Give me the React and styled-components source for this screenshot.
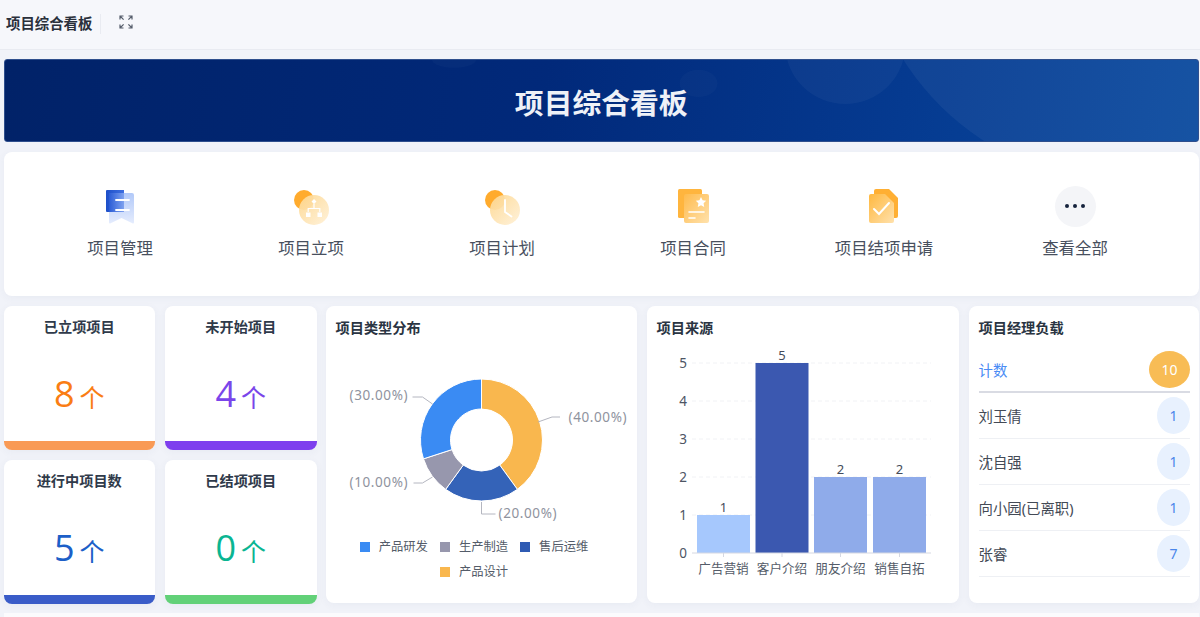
import React from "react";
import styled, { createGlobalStyle } from "styled-components";

const Global = createGlobalStyle`
  html, body { margin: 0; padding: 0; background: #f1f3f9; }
  body { font-family: "Noto Sans", "Noto Sans CJK SC", sans-serif; color: #2c3644; overflow: hidden; }
  * { box-sizing: border-box; }
`;

const Page = styled.div`
  width: 1200px;
  height: 617px;
  overflow: hidden;
  display: flex;
  flex-direction: column;
`;
const TopBar = styled.header`
  height: 50px;
  flex: none;
  display: flex;
  align-items: center;
  padding: 0 0 2px 6px;
  background: #f6f7fb;
  border-bottom: 1px solid #e9ebf1;
`;
const TopTitle = styled.h1`
  margin: 0;
  font-size: 14.4px;
  line-height: 20px;
  font-weight: 700;
  color: #2a303b;
  padding-right: 8px;
  border-right: 1px solid #e9ebf1;
`;
const ExpandButton = styled.span`
  display: flex;
  margin-left: 18px;
  margin-top: -4px;
  color: #555d6b;
`;
const Content = styled.main`
  display: flex;
  flex-direction: column;
  gap: 10px;
  padding: 9px 1px 0 3.5px;
`;
const Banner = styled.section`
  position: relative;
  height: 83px;
  border-radius: 3px;
  overflow: hidden;
  background: linear-gradient(100deg, #012268 0%, #01297a 45%, #053a90 75%, #0a4a9f 100%);
  display: flex;
  align-items: center;
  justify-content: center;
  border: 1px solid #2f4f8d;
`;
const BannerArt = styled.svg`
  position: absolute;
  inset: 0;
  width: 100%;
  height: 100%;
`;
const BannerTitle = styled.h2`
  position: relative;
  margin: 5px 0 0;
  font-size: 28.8px;
  line-height: 40px;
  font-weight: 700;
  color: #eef1f7;
`;
const NavCard = styled.nav`
  height: 144px;
  background: #fff;
  border-radius: 8px;
  box-shadow: 0 2px 8px rgba(60, 70, 110, 0.05);
  display: grid;
  grid-template-columns: repeat(6, 191px);
  padding: 33px 0 0 21px;
`;
const NavItem = styled.div`
  display: flex;
  flex-direction: column;
  align-items: center;
  gap: 9px;
`;
const NavIcon = styled.div`
  width: 42px;
  height: 42px;
  display: flex;
  align-items: center;
  justify-content: center;
`;
const NavLabel = styled.span`
  font-size: 16.4px;
  line-height: 24px;
  color: #48505e;
`;
const MoreCircle = styled.div`
  width: 41px;
  height: 41px;
  border-radius: 50%;
  background: #f4f5f8;
  display: flex;
  align-items: center;
  justify-content: center;
  gap: 4px;
`;
const Dot = styled.i`
  width: 4px;
  height: 4px;
  border-radius: 50%;
  background: #15233d;
`;
const Dash = styled.div`
  display: grid;
  grid-template-columns: 312px 311px 312px 230.5px;
  gap: 10px;
  height: 298px;
`;
const StatGrid = styled.div`
  display: grid;
  grid-template-columns: 151.5px 151.5px;
  grid-auto-rows: 144px;
  gap: 10px;
`;
const StatCard = styled.article`
  background: #fff;
  border-radius: 8px;
  overflow: hidden;
  display: flex;
  flex-direction: column;
  align-items: center;
  box-shadow: 0 2px 8px rgba(60, 70, 110, 0.05);
  border-bottom: 9px solid ${p => p.$bar};
`;
const StatTitle = styled.h3`
  margin: 11px 0 0;
  font-size: 14.2px;
  line-height: 20px;
  font-weight: 700;
  color: #2f3a4a;
`;
const StatValue = styled.div`
  margin-top: 32px;
  display: flex;
  align-items: baseline;
  gap: 5px;
  color: ${p => p.$color};
  font-family: "Open Sans", "Noto Sans", sans-serif;
  font-size: 36px;
  line-height: 50px;
`;
const StatUnit = styled.span`
  font-family: "Noto Sans CJK SC", sans-serif;
  font-size: 25px;
`;
const ChartCard = styled.article`
  background: #fff;
  border-radius: 8px;
  box-shadow: 0 2px 8px rgba(60, 70, 110, 0.05);
  height: 297px;
  padding: 12px ${p => (p.$tight ? "9px" : "10px")} 0 10px;
  display: flex;
  flex-direction: column;
  overflow: hidden;
`;
const CardTitle = styled.h3`
  margin: 0;
  font-size: 14.2px;
  line-height: 20px;
  font-weight: 700;
  color: #2a3442;
`;
const ChartSvg = styled.svg`
  display: block;
  flex: none;
  font-family: "Noto Sans", "Noto Sans CJK SC", sans-serif;
`;
const Legend = styled.ul`
  list-style: none;
  margin: 0 0 0 -14px;
  padding: 0;
  display: flex;
  flex-wrap: wrap;
  justify-content: center;
  column-gap: 12px;
  row-gap: 6px;
  width: 250px;
  align-self: center;
`;
const LegendItem = styled.li`
  display: flex;
  align-items: center;
  gap: 9px;
  font-size: 12.3px;
  line-height: 19px;
  color: #545c69;
`;
const Swatch = styled.i`
  width: 10px;
  height: 10px;
  background: ${p => p.$color};
`;
const List = styled.ul`
  list-style: none;
  margin: 12px 0 0;
  padding: 0;
`;
const ListRow = styled.li`
  height: ${p => (p.$head ? "43px" : "46px")};
  display: flex;
  align-items: center;
  justify-content: space-between;
  padding-bottom: ${p => (p.$head ? "3px" : "0")};
  border-bottom: ${p => (p.$head ? "2px solid #d9dbe3" : "1px solid #eef0f4")};
  font-size: 14.4px;
  color: ${p => (p.$head ? "#4a8bf5" : "#434a56")};
`;
const Badge = styled.span`
  width: ${p => (p.$head ? "41px" : "33px")};
  height: 37px;
  border-radius: 50%;
  display: flex;
  align-items: center;
  justify-content: center;
  font-size: 14px;
  background: ${p => (p.$head ? "#f8bc55" : "#e8f1fe")};
  color: ${p => (p.$head ? "#fff" : "#4a86ea")};
`;
const Footer = styled.div`
  height: 10px;
  background: #fbfbfd;
  margin-top: -1px;
`;

const ExpandIcon = () => (
  <svg width="14" height="14" viewBox="0 0 14 14" fill="none" stroke="currentColor" strokeWidth="1.2" aria-hidden="true">
    <path d="M1 4.5V1h3.5M1 1l3.6 3.6M9.5 1H13v3.5M13 1 9.4 4.6M1 9.5V13h3.5M1 13l3.6-3.6M13 9.5V13H9.5M13 13 9.4 9.4" />
  </svg>
);

const ManageIcon = () => (
  <svg width="42" height="42" viewBox="0 0 42 42">
    <defs>
      <linearGradient id="mg1" x1="0" y1="0" x2="1" y2="0">
        <stop offset="0" stopColor="#1d4fc9" /><stop offset="1" stopColor="#3f6fe0" />
      </linearGradient>
      <linearGradient id="mg2" x1="0" y1="0" x2="0" y2="1">
        <stop offset="0" stopColor="#a9c3f8" /><stop offset="1" stopColor="#e2eafd" />
      </linearGradient>
      <linearGradient id="mg3" x1="0" y1="0" x2="1" y2="0">
        <stop offset="0" stopColor="#2a5cd6" /><stop offset="1" stopColor="#7fa2ef" />
      </linearGradient>
    </defs>
    <path d="M7 6a1 1 0 0 1 1-1h17v22H8a1 1 0 0 1-1-1z" fill="url(#mg1)" />
    <path d="M10 8h23a2 2 0 0 1 2 2v27.500a1 1 0 0 1-1.600.8L22.500 33l-10.900 5.300a1 1 0 0 1-1.600-.8z" fill="url(#mg2)" fillOpacity=".9" />
    <path d="M10 8h15v19H10z" fill="url(#mg3)" />
    <path d="M17 15h13M17 25h13" stroke="#fff" strokeWidth="1.800" strokeLinecap="round" fill="none" />
  </svg>
);
const OrgIcon = () => (
  <svg width="42" height="42" viewBox="0 0 42 42">
    <defs>
      <linearGradient id="og1" x1="0" y1="0" x2="1" y2="1">
        <stop offset="0" stopColor="#fdd78f" /><stop offset="1" stopColor="#fff1d8" />
      </linearGradient>
    </defs>
    <circle cx="14" cy="15" r="10" fill="#ffab2d" />
    <circle cx="24" cy="25" r="15" fill="url(#og1)" fillOpacity=".93" />
    <path d="M24 14l2.500 2.500L24 19l-2.500-2.500zM16 27.500h4.500V32H16zM27.500 27.500H32V32h-4.500z" fill="#fff" />
    <path d="M24 19v4M18.200 27v-3.500h11.600V27" stroke="#fff" strokeWidth="1.200" fill="none" />
  </svg>
);
const ClockIcon = () => (
  <svg width="42" height="42" viewBox="0 0 42 42">
    <defs>
      <linearGradient id="cg1" x1="0" y1="0" x2="1" y2="1">
        <stop offset="0" stopColor="#fdd78f" /><stop offset="1" stopColor="#fff1d8" />
      </linearGradient>
    </defs>
    <circle cx="14" cy="15" r="10" fill="#ffab2d" />
    <circle cx="24" cy="25" r="15" fill="url(#cg1)" fillOpacity=".93" />
    <path d="M24 15v12l6.500 4.500" stroke="#fff" strokeWidth="1.800" fill="none" strokeLinecap="round" />
  </svg>
);
const ContractIcon = () => (
  <svg width="42" height="42" viewBox="0 0 42 42">
    <defs>
      <linearGradient id="kg1" x1="0" y1="0" x2="1" y2="1">
        <stop offset="0" stopColor="#ffbb4d" /><stop offset="1" stopColor="#ffe2ad" />
      </linearGradient>
    </defs>
    <rect x="6" y="4" width="24" height="29" rx="1.500" fill="#ffb53e" />
    <rect x="12" y="9" width="25" height="29" rx="2" fill="url(#kg1)" />
    <path d="M29 12l1.600 3.300 3.600.5-2.600 2.500.6 3.600-3.200-1.700-3.200 1.700.6-3.600-2.600-2.500 3.600-.5z" fill="#fff" />
    <path d="M17 27h15M17 33h6" stroke="#fff" strokeWidth="1.600" strokeLinecap="round" />
  </svg>
);
const CheckDocIcon = () => (
  <svg width="42" height="42" viewBox="0 0 42 42">
    <defs>
      <linearGradient id="dg1" x1="0" y1="0" x2="1" y2="1">
        <stop offset="0" stopColor="#ffb83f" /><stop offset="1" stopColor="#ffe1ac" />
      </linearGradient>
    </defs>
    <path d="M11 6a2 2 0 0 1 2-2h13l9 9v18a2 2 0 0 1-2 2H11z" fill="#ffaf33" />
    <path d="M6 11a2 2 0 0 1 2-2h14l9 9v18a2 2 0 0 1-2 2H8a2 2 0 0 1-2-2z" fill="url(#dg1)" />
    <path d="M11 24l5 5 10-11" stroke="#fff" strokeWidth="2" fill="none" strokeLinecap="round" />
  </svg>
);

const navItems = [
  ["项目管理", <ManageIcon />],
  ["项目立项", <OrgIcon />],
  ["项目计划", <ClockIcon />],
  ["项目合同", <ContractIcon />],
  ["项目结项申请", <CheckDocIcon />],
  ["查看全部", <MoreCircle><Dot /><Dot /><Dot /></MoreCircle>],
];

const stats = [
  { title: "已立项项目", value: 8, color: "#fa7d14", bar: "#f99a55" },
  { title: "未开始项目", value: 4, color: "#7a45ea", bar: "#7e3fee" },
  { title: "进行中项目数", value: 5, color: "#1c5fc8", bar: "#3a5cc8" },
  { title: "已结项项目", value: 0, color: "#0ab592", bar: "#62d178" },
];

const polar = (r, pct) => {
  const a = (pct * 2 * Math.PI) / 100;
  return [r * Math.sin(a), -r * Math.cos(a)];
};
const slicePath = (from, to, R = 61, r = 31) => {
  const [x1, y1] = polar(R, from);
  const [x2, y2] = polar(R, to);
  const [x3, y3] = polar(r, to);
  const [x4, y4] = polar(r, from);
  return `M${x1} ${y1}A${R} ${R} 0 0 1 ${x2} ${y2}L${x3} ${y3}A${r} ${r} 0 0 0 ${x4} ${y4}Z`;
};

const slices = [
  { from: 0, to: 40, color: "#f9b74e" },
  { from: 40, to: 60, color: "#3463b8" },
  { from: 60, to: 70, color: "#9797ad" },
  { from: 70, to: 100, color: "#3a8bf3" },
];
const pieLabels = [
  { x: 232.500, y: 84, text: "(40.00%)", line: "M202 84l14 -5h8" },
  { x: 162.500, y: 180, text: "(20.00%)", line: "M145.500 164v12h14" },
  { x: 13.500, y: 149, text: "(10.00%)", line: "M96.500 139l-10 6h-9" },
  { x: 13.500, y: 62, text: "(30.00%)", line: "M96.500 66l-10 -7h-10" },
];

const DonutChart = () => (
  <ChartSvg width="291" height="199" viewBox="0 0 291 199">
    <g transform="translate(145.500 102)">
      {slices.map(s => (
        <path key={s.from} d={slicePath(s.from, s.to)} fill={s.color} stroke="#fff" strokeWidth="1" />
      ))}
    </g>
    {pieLabels.map(l => (
      <g key={l.text}>
        <path d={l.line} fill="none" stroke="#b4b6c0" strokeWidth="1" />
        <text x={l.x} y={l.y} fontSize="13.500" fill="#8f939e" letterSpacing=".6">{l.text}</text>
      </g>
    ))}
  </ChartSvg>
);

const bars = [
  { x: 40, w: 53, v: 1, color: "#a6c8fd", name: "广告营销" },
  { x: 98.500, w: 53, v: 5, color: "#3b58b0", name: "客户介绍" },
  { x: 157, w: 53, v: 2, color: "#8fabea", name: "朋友介绍" },
  { x: 216, w: 53, v: 2, color: "#8fabea", name: "销售自拓" },
];
const BASE = 215;
const UNIT = 38;

const BarChart = () => (
  <ChartSvg width="291" height="250" viewBox="0 0 291 250">
    {[1, 2, 3, 4, 5].map(n => (
      <path key={n} d={`M35 ${BASE - n * UNIT}H274`} stroke="#f1f2f5" strokeDasharray="4 3" />
    ))}
    {[0, 1, 2, 3, 4, 5].map(n => (
      <text key={n} x="30" y={BASE - n * UNIT + 5} fontSize="13.500" textAnchor="end" fill="#4e5564">{n}</text>
    ))}
    {bars.map(b => (
      <g key={b.name}>
        <rect x={b.x} y={BASE - b.v * UNIT} width={b.w} height={b.v * UNIT} fill={b.color} />
        <text x={b.x + b.w / 2} y={BASE - b.v * UNIT - 3} fontSize="13" textAnchor="middle" fill="#444b5a">{b.v}</text>
        <path d={`M${b.x + b.w / 2} ${BASE}v4`} stroke="#d5d8e2" />
        <text x={b.x + b.w / 2} y={BASE + 20} fontSize="12.600" textAnchor="middle" fill="#545c69">{b.name}</text>
      </g>
    ))}
    <path d={`M35 ${BASE}H274`} stroke="#d5d8e2" />
  </ChartSvg>
);

const managers = [["刘玉倩", 1], ["沈自强", 1], ["向小园(已离职)", 1], ["张睿", 7]];
const legend = [["产品研发", "#3a8bf3"], ["生产制造", "#9797ad"], ["售后运维", "#2f5bb3"], ["产品设计", "#f9b74e"]];

export default function App() {
  return (
    <Page>
      <Global />
      <TopBar>
        <TopTitle>项目综合看板</TopTitle>
        <ExpandButton><ExpandIcon /></ExpandButton>
      </TopBar>
      <Content>
        <Banner>
          <BannerArt viewBox="0 0 1196 83" preserveAspectRatio="none" aria-hidden="true">
            <ellipse cx="842" cy="-15" rx="60" ry="60" fill="#fff" fillOpacity=".04" />
            <circle cx="1126" cy="-139" r="265" fill="#fff" fillOpacity=".05" />
            <ellipse cx="695" cy="24" rx="19" ry="14" fill="#fff" fillOpacity=".025" />
            <ellipse cx="450" cy="0" rx="22" ry="8" fill="#fff" fillOpacity=".025" />
          </BannerArt>
          <BannerTitle>项目综合看板</BannerTitle>
        </Banner>
        <NavCard>
          {navItems.map(([label, icon]) => (
            <NavItem key={label}>
              <NavIcon>{icon}</NavIcon>
              <NavLabel>{label}</NavLabel>
            </NavItem>
          ))}
        </NavCard>
        <Dash>
          <StatGrid>
            {stats.map(s => (
              <StatCard key={s.title} $bar={s.bar}>
                <StatTitle>{s.title}</StatTitle>
                <StatValue $color={s.color}>{s.value}<StatUnit>个</StatUnit></StatValue>
              </StatCard>
            ))}
          </StatGrid>
          <ChartCard>
            <CardTitle>项目类型分布</CardTitle>
            <DonutChart />
            <Legend>
              {legend.map(([name, color]) => (
                <LegendItem key={name}><Swatch $color={color} />{name}</LegendItem>
              ))}
            </Legend>
          </ChartCard>
          <ChartCard>
            <CardTitle>项目来源</CardTitle>
            <BarChart />
          </ChartCard>
          <ChartCard $tight>
            <CardTitle>项目经理负载</CardTitle>
            <List>
              <ListRow $head>计数<Badge $head>10</Badge></ListRow>
              {managers.map(([name, n]) => (
                <ListRow key={name}>{name}<Badge>{n}</Badge></ListRow>
              ))}
            </List>
          </ChartCard>
        </Dash>
        <Footer />
      </Content>
    </Page>
  );
}
